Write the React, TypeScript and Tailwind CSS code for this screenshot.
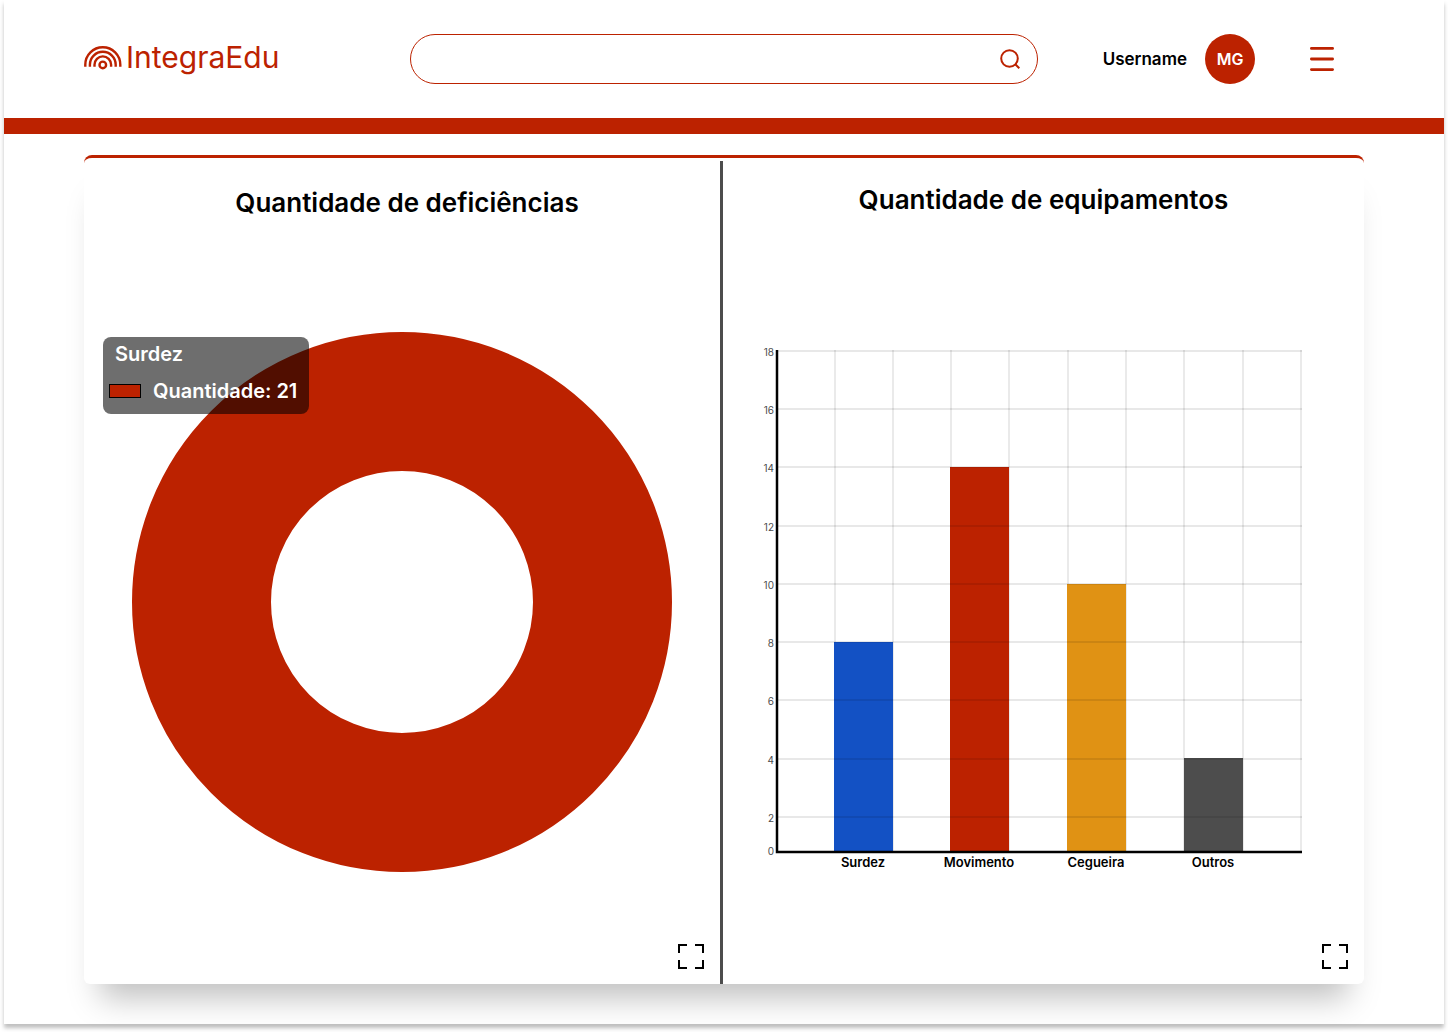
const yTicks = [
  { label: '18', y: 6 },
  { label: '16', y: 64 },
  { label: '14', y: 122 },
  { label: '12', y: 181 },
  { label: '10', y: 239 },
  { label: '8', y: 297 },
  { label: '6', y: 355 },
  { label: '4', y: 414 },
  { label: '2', y: 472 },
]

const columns = [85, 143, 201, 259, 318, 376, 434, 493, 551]

const bars = [
  { label: 'Surdez', x: 84, y: 297, color: '#1351c4' },
  { label: 'Movimento', x: 200, y: 122, color: '#bc2200' },
  { label: 'Cegueira', x: 317, y: 239, color: '#e09214' },
  { label: 'Outros', x: 434, y: 413, color: '#4d4d4d' },
]

function Logo() {
  return (
    <a href="#" className="flex items-center gap-1 text-[#bc2200]">
      <svg className="h-[26px] w-[38px]" viewBox="0 0 38 26" fill="none" stroke="currentColor" strokeWidth="2.4" aria-hidden="true">
        <path d="M1.300 20.700v-2a17.500 17.500 0 0 1 35 0v2" />
        <path d="M5.900 20.700v-2a12.900 12.900 0 0 1 25.800 0v2" />
        <path d="M10.500 20.700v-2a8.300 8.300 0 0 1 16.600 0v2" />
        <circle cx="18.800" cy="18.900" r="3.300" />
      </svg>
      <span className="-mt-1 font-['Inter',sans-serif] text-[30px] leading-8">IntegraEdu</span>
    </a>
  )
}

function ExpandButton({ label }: { label: string }) {
  return (
    <button type="button" aria-label={label} className="mr-4 self-end">
      <svg className="block h-[25px] w-[26px]" viewBox="0 0 26 25" fill="none" stroke="#000" strokeWidth="2" aria-hidden="true">
        <path d="M1 9V1h8M17 1h8v8M25 16v8h-8M9 24H1v-8" />
      </svg>
    </button>
  )
}

function DonutChart() {
  return (
    <figure className="relative mt-[113px] mb-[72px] w-full max-w-[540px]">
      <svg className="block w-full" viewBox="0 0 540 540" role="img" aria-label="Surdez: 21">
        <circle cx="270" cy="270" r="200.500" fill="none" stroke="#bc2200" strokeWidth="139" />
      </svg>
      <figcaption className="absolute top-[5px] -left-[29px] h-[77px] w-[206px] rounded-lg bg-black/57 px-1.5 pt-[3px] text-xl leading-7 font-semibold whitespace-nowrap text-white">
        <p className="pl-1.5">Surdez</p>
        <p className="mt-[9px] flex items-center gap-3">
          <span className="h-3.5 w-8 shrink-0 border border-black bg-[#bc2200]" />
          Quantidade: 21
        </p>
      </figcaption>
    </figure>
  )
}

function BarChart() {
  return (
    <figure className="mt-[129px] mr-[27px] mb-auto w-full max-w-[560px]">
      <svg className="block w-full" viewBox="0 0 560 530" role="img" aria-label="Quantidade de equipamentos">
        <g stroke="#000" strokeOpacity="0.12" strokeWidth="1.400">
          {columns.map((x) => (
            <path key={x} d={`M${x} 5V506`} />
          ))}
        </g>
        {bars.map((b) => (
          <rect key={b.label} x={b.x} y={b.y} width="59" height={507 - b.y} fill={b.color} />
        ))}
        <g stroke="#000" strokeOpacity="0.12" strokeWidth="1.400">
          {yTicks.map((t) => (
            <path key={t.label} d={`M28 ${t.y}H552`} />
          ))}
        </g>
        <path d="M27 5V507H552" fill="none" stroke="#000" strokeWidth="2.500" />
        <g fontSize="10" fill="#4d4d4d" textAnchor="end">
          {yTicks.map((t) => (
            <text key={t.label} x="24" y={t.y + 5}>{t.label}</text>
          ))}
          <text x="24" y="510">0</text>
        </g>
        <g fontSize="13" fontWeight="600" textAnchor="middle">
          {bars.map((b) => (
            <text key={b.label} x={b.x + 29} y="522">{b.label}</text>
          ))}
        </g>
      </svg>
    </figure>
  )
}

export default function App() {
  return (
    <div className="px-1 pb-2 font-['Inter',sans-serif] text-black">
      <div className="bg-white pb-10 shadow-[0_4px_4px_rgba(0,0,0,0.25)]">
        <header className="flex h-[118px] items-center pr-[110px] pl-20">
          <div className="w-[326px] shrink-0">
            <Logo />
          </div>
          <form role="search" className="flex h-[50px] min-w-0 flex-1 items-center rounded-full border border-[#bc2200] pr-[17px] pl-5">
            <input type="search" aria-label="Pesquisar" className="h-full min-w-0 flex-1 bg-transparent outline-none" />
            <button type="submit" aria-label="Buscar">
              <svg className="block size-5" viewBox="0 0 20 20" fill="none" stroke="#bc2200" strokeWidth="2" aria-hidden="true">
                <circle cx="9.500" cy="9.500" r="8.300" />
                <path d="M15.300 15.300L19.300 19.300" />
              </svg>
            </button>
          </form>
          <div className="ml-[65px] flex items-center">
            <span className="text-[17px] leading-6 font-semibold">Username</span>
            <span className="ml-[18px] flex size-[50px] items-center justify-center rounded-full bg-[#bc2200] font-semibold text-white">MG</span>
            <button type="button" aria-label="Menu" className="ml-[55px]">
              <svg className="block size-6" viewBox="0 0 24 24" stroke="#bc2200" strokeWidth="2.800" strokeLinecap="round" aria-hidden="true">
                <path d="M1.400 1.400h21.200M1.400 12h21.200M1.400 22.600h21.200" />
              </svg>
            </button>
          </div>
        </header>
        <div className="h-4 bg-[#bc2200]" />
        <main className="mx-20 mt-[21px] grid grid-cols-[636fr_3px_641fr] rounded-t-lg rounded-b-md border-t-3 border-[#bc2200] bg-white pt-[3px] shadow-[0_30px_30px_-16px_rgba(0,0,0,0.25)]">
          <section className="flex min-w-0 flex-col items-center pt-[26px] pb-[15px]">
            <h2 className="ml-2.5 text-[26px] leading-8 font-semibold">Quantidade de deficiências</h2>
            <DonutChart />
            <ExpandButton label="Expandir deficiências" />
          </section>
          <div className="bg-[#4d4d4d]" />
          <section className="flex min-w-0 flex-col items-center pt-[23px] pb-[15px]">
            <h2 className="text-[26px] leading-8 font-semibold">Quantidade de equipamentos</h2>
            <BarChart />
            <ExpandButton label="Expandir equipamentos" />
          </section>
        </main>
      </div>
    </div>
  )
}
